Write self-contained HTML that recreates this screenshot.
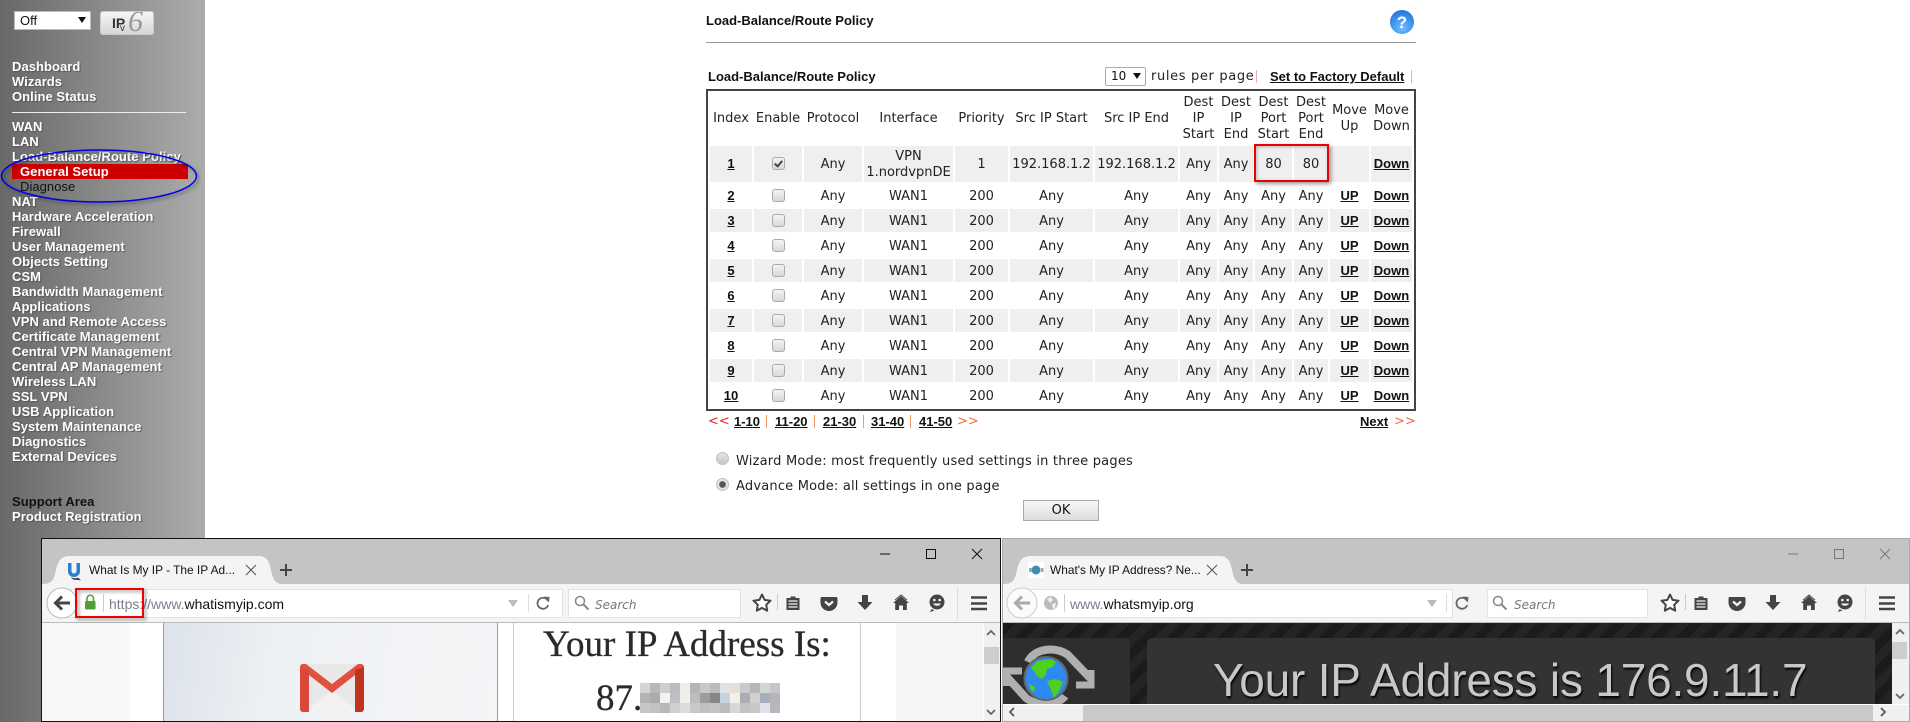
<!DOCTYPE html>
<html><head><meta charset="utf-8"><title>Load-Balance/Route Policy</title>
<style>
html,body{margin:0;padding:0;background:#fff;}
body{width:1910px;height:722px;position:relative;overflow:hidden;font-family:"DejaVu Sans",sans-serif;font-size:13px;color:#222;}
.a{position:absolute;white-space:nowrap;}
#side{position:absolute;left:0;top:0;width:205px;height:722px;background:linear-gradient(90deg,#686868,#acacac);}
#menu{position:absolute;left:12px;top:59px;font:bold 13px/15px "Liberation Sans",sans-serif;color:#fff;text-shadow:1px 1px 1px #555;letter-spacing:.05px;}
#menu div{height:15px;white-space:nowrap;}
.b{font:bold 13px/15px "Liberation Sans",sans-serif;color:#111;}
.bu{font:bold 13px/15px "Liberation Sans",sans-serif;color:#111;text-decoration:underline;}
#t{position:absolute;left:706px;top:89px;width:706px;border:2px solid #444;border-spacing:2px;border-collapse:separate;table-layout:fixed;background:#fff;}
#t td{padding:2px 0 0;box-sizing:border-box;text-align:center;vertical-align:middle;font:13px/16px "DejaVu Sans",sans-serif;color:#222;height:23px;overflow:hidden;white-space:nowrap;}
#t tr.g td{background:#efefef;}
#t tr.h td{height:51px;padding:0;}
#t tr.r1 td{height:36px;}
#t tr.r1 a{position:relative;top:-1px;}
#t a{font:bold 13px/15px "Liberation Sans",sans-serif;color:#111;text-decoration:underline;}
.cb{display:inline-block;width:11px;height:11px;border:1px solid #aaa;border-radius:3px;background:linear-gradient(#f4f4f4,#d8d8d8);vertical-align:middle;position:relative;top:-1px;}
.cb.on::after{content:"";position:absolute;left:3px;top:1px;width:3px;height:6px;border:solid #444;border-width:0 2px 2px 0;transform:rotate(40deg);}
.win{position:absolute;top:538px;height:184px;box-sizing:border-box;background:#c4c4c4;overflow:hidden;}
.tab{font:11.9px/16px "Liberation Sans",sans-serif;color:#111;z-index:6;}
.url{font:14px/20px "Liberation Sans",sans-serif;color:#111;}
.url span{color:#7d7d8f;}
.srch{font:italic 12px/18px "DejaVu Sans",sans-serif;color:#777;}
.box{position:absolute;background:#fff;border:1px solid #e3e3e3;box-sizing:border-box;}
</style></head>
<body>
<div id="side"></div>
<div class="a" style="left:12px;top:164px;width:176px;height:15px;background:#cc0000;"></div>
<div id="menu">
<div>Dashboard</div><div>Wizards</div><div>Online Status</div><div></div>
<div>WAN</div><div>LAN</div><div>Load-Balance/Route Policy</div>
<div style="position:relative;left:8px;text-shadow:none;">General Setup</div>
<div style="position:relative;left:8px;color:#111;font-weight:normal;text-shadow:none;">Diagnose</div>
<div>NAT</div><div>Hardware Acceleration</div><div>Firewall</div><div>User Management</div><div>Objects Setting</div><div>CSM</div><div>Bandwidth Management</div><div>Applications</div><div>VPN and Remote Access</div><div>Certificate Management</div><div>Central VPN Management</div><div>Central AP Management</div><div>Wireless LAN</div><div>SSL VPN</div><div>USB Application</div><div>System Maintenance</div><div>Diagnostics</div><div>External Devices</div><div></div><div></div>
<div style="color:#111;text-shadow:none;">Support Area</div><div>Product Registration</div>
</div>
<div class="a" style="left:12px;top:112px;width:174px;height:1px;background:#eee;"></div>
<div class="a" style="left:14px;top:11px;width:77px;height:19px;box-sizing:border-box;background:#fff;border:1px solid #bbb;font:13px/17px 'Liberation Sans',sans-serif;color:#111;padding-left:5px;">Off<span style="position:absolute;left:63px;top:5px;width:0;height:0;border:4px solid transparent;border-top:6px solid #111;border-bottom:0;"></span></div>
<div class="a" style="left:100px;top:11px;width:54px;height:24px;box-sizing:border-box;background:linear-gradient(#f7f7f7,#d6d6d6);border:1px solid #ccc;border-radius:3px;overflow:hidden;"><span class="a" style="left:11px;top:4px;font:bold 14px/15px 'Liberation Sans',sans-serif;color:#333;">IP</span><span class="a" style="left:19px;top:12px;font:10px/10px 'Liberation Sans',sans-serif;color:#333;">v</span><span class="a" style="left:27px;top:-5px;font:italic 30px/30px 'Liberation Serif',serif;color:#999;">6</span></div>

<!-- main header -->
<div class="a b" style="left:706px;top:13px;">Load-Balance/Route Policy</div>
<div class="a" style="left:706px;top:42px;width:710px;height:1px;background:#999;"></div>
<svg class="a" style="left:1390px;top:10px;" width="24" height="24"><defs><radialGradient id="hb" cx=".5" cy=".75" r=".8"><stop offset="0" stop-color="#6cc0ff"/><stop offset="1" stop-color="#1c6fd8"/></radialGradient></defs><circle cx="12" cy="12" r="12" fill="url(#hb)"/><text x="12" y="18" text-anchor="middle" font-family="Liberation Sans" font-weight="bold" font-size="17" fill="#fff">?</text></svg>
<div class="a b" style="left:708px;top:69px;">Load-Balance/Route Policy</div>
<div class="a" style="left:1105px;top:67px;width:41px;height:19px;box-sizing:border-box;border:1px solid #aaa;border-radius:2px;font:12px/17px 'DejaVu Sans',sans-serif;padding-left:5px;color:#111;background:#fff;">10<span style="position:absolute;left:27px;top:5px;width:0;height:0;border:4px solid transparent;border-top:6px solid #111;border-bottom:0;"></span></div>
<div class="a" style="left:1151px;top:69px;line-height:16px;letter-spacing:.65px;">rules per page</div>
<div class="a" style="left:1256px;top:70px;width:1px;height:13px;background:#f3a6c6;"></div>
<div class="a bu" style="left:1270px;top:69px;">Set to Factory Default</div>
<div class="a" style="left:1411px;top:70px;width:1px;height:13px;background:#f4b27a;"></div>

<table id="t"><colgroup><col style="width:42px"><col style="width:48px"><col style="width:58px"><col style="width:89px"><col style="width:53px"><col style="width:83px"><col style="width:83px"><col style="width:37px"><col style="width:34px"><col style="width:37px"><col style="width:34px"><col style="width:39px"><col style="width:41px"></colgroup>
<tr class="h"><td>Index</td><td>Enable</td><td>Protocol</td><td>Interface</td><td>Priority</td><td>Src IP Start</td><td>Src IP End</td><td>Dest<br>IP<br>Start</td><td>Dest<br>IP<br>End</td><td>Dest<br>Port<br>Start</td><td>Dest<br>Port<br>End</td><td>Move<br>Up</td><td>Move<br>Down</td></tr>
<tr class="g r1"><td><a>1</a></td><td><span class="cb on"></span></td><td>Any</td><td>VPN<br>1.nordvpnDE</td><td>1</td><td>192.168.1.2</td><td>192.168.1.2</td><td>Any</td><td>Any</td><td>80</td><td>80</td><td></td><td><a>Down</a></td></tr>
<tr><td><a>2</a></td><td><span class="cb"></span></td><td>Any</td><td>WAN1</td><td>200</td><td>Any</td><td>Any</td><td>Any</td><td>Any</td><td>Any</td><td>Any</td><td><a>UP</a></td><td><a>Down</a></td></tr>
<tr class="g"><td><a>3</a></td><td><span class="cb"></span></td><td>Any</td><td>WAN1</td><td>200</td><td>Any</td><td>Any</td><td>Any</td><td>Any</td><td>Any</td><td>Any</td><td><a>UP</a></td><td><a>Down</a></td></tr>
<tr><td><a>4</a></td><td><span class="cb"></span></td><td>Any</td><td>WAN1</td><td>200</td><td>Any</td><td>Any</td><td>Any</td><td>Any</td><td>Any</td><td>Any</td><td><a>UP</a></td><td><a>Down</a></td></tr>
<tr class="g"><td><a>5</a></td><td><span class="cb"></span></td><td>Any</td><td>WAN1</td><td>200</td><td>Any</td><td>Any</td><td>Any</td><td>Any</td><td>Any</td><td>Any</td><td><a>UP</a></td><td><a>Down</a></td></tr>
<tr><td><a>6</a></td><td><span class="cb"></span></td><td>Any</td><td>WAN1</td><td>200</td><td>Any</td><td>Any</td><td>Any</td><td>Any</td><td>Any</td><td>Any</td><td><a>UP</a></td><td><a>Down</a></td></tr>
<tr class="g"><td><a>7</a></td><td><span class="cb"></span></td><td>Any</td><td>WAN1</td><td>200</td><td>Any</td><td>Any</td><td>Any</td><td>Any</td><td>Any</td><td>Any</td><td><a>UP</a></td><td><a>Down</a></td></tr>
<tr><td><a>8</a></td><td><span class="cb"></span></td><td>Any</td><td>WAN1</td><td>200</td><td>Any</td><td>Any</td><td>Any</td><td>Any</td><td>Any</td><td>Any</td><td><a>UP</a></td><td><a>Down</a></td></tr>
<tr class="g"><td><a>9</a></td><td><span class="cb"></span></td><td>Any</td><td>WAN1</td><td>200</td><td>Any</td><td>Any</td><td>Any</td><td>Any</td><td>Any</td><td>Any</td><td><a>UP</a></td><td><a>Down</a></td></tr>
<tr><td><a>10</a></td><td><span class="cb"></span></td><td>Any</td><td>WAN1</td><td>200</td><td>Any</td><td>Any</td><td>Any</td><td>Any</td><td>Any</td><td>Any</td><td><a>UP</a></td><td><a>Down</a></td></tr>
</table>
<div class="a" style="left:1254px;top:144px;width:75px;height:38px;box-sizing:border-box;border:2px solid #e00;box-shadow:2px 2px 4px rgba(0,0,0,.4),inset 1px 1px 3px rgba(0,0,0,.25);"></div>

<!-- pagination -->
<div class="a" style="left:708px;top:414px;font:13px/16px 'DejaVu Sans',sans-serif;color:#e22;">&lt;&lt;</div>
<div class="a bu" style="left:734px;top:414px;">1-10</div>
<div class="a" style="left:766px;top:415px;width:1px;height:13px;background:#f09a68;"></div>
<div class="a bu" style="left:775px;top:414px;">11-20</div>
<div class="a" style="left:814px;top:415px;width:1px;height:13px;background:#f09a68;"></div>
<div class="a bu" style="left:823px;top:414px;">21-30</div>
<div class="a" style="left:863px;top:415px;width:1px;height:13px;background:#f09a68;"></div>
<div class="a bu" style="left:871px;top:414px;">31-40</div>
<div class="a" style="left:910px;top:415px;width:1px;height:13px;background:#f09a68;"></div>
<div class="a bu" style="left:919px;top:414px;">41-50</div>
<div class="a" style="left:957px;top:414px;font:13px/16px 'DejaVu Sans',sans-serif;color:#f06a3a;">&gt;&gt;</div>
<div class="a bu" style="left:1360px;top:414px;">Next</div>
<div class="a" style="left:1394px;top:414px;font:13px/16px 'DejaVu Sans',sans-serif;color:#f06a3a;">&gt;&gt;</div>

<span class="a" style="left:716px;top:452px;width:11px;height:11px;border-radius:50%;background:linear-gradient(#e4e4e4,#c8c8c8);border:1px solid #c0c0c0;"></span>
<span class="a" style="left:716px;top:478px;width:11px;height:11px;border-radius:50%;background:radial-gradient(circle,#555 0 3px,#e2e2e2 3.6px);border:1px solid #c0c0c0;"></span>
<div class="a" style="left:736px;top:454px;line-height:16px;letter-spacing:.21px;">Wizard Mode: most frequently used settings in three pages</div>
<div class="a" style="left:736px;top:479px;line-height:16px;letter-spacing:.2px;">Advance Mode: all settings in one page</div>
<div class="a" style="left:1023px;top:500px;width:76px;height:21px;box-sizing:border-box;border:1px solid #aaa;background:linear-gradient(#f8f8f8,#dcdcdc);text-align:center;font:13px/19px 'DejaVu Sans',sans-serif;color:#111;">OK</div>

<!-- window 1 -->
<div class="win" style="left:41px;width:960px;border:1px solid #111;"></div>
<!-- window 2 -->
<div class="win" style="left:1002px;width:908px;border:1px solid #aaa;"></div>

<!-- toolbars & content backgrounds -->
<div class="a" style="left:42px;top:584px;width:958px;height:38px;background:#f4f4f4;border-bottom:1px solid #bbb;"></div>
<div class="a" style="left:1003px;top:584px;width:906px;height:38px;background:#f4f4f4;border-bottom:1px solid #bbb;"></div>

<!-- content 1 -->
<div class="a" style="left:42px;top:623px;width:958px;height:98px;background:#fff;overflow:hidden;">
  <div class="a" style="left:0;top:0;width:88px;height:98px;background:#f7f7f7;"></div>
  <div class="a" style="left:121px;top:0;width:335px;height:98px;box-sizing:border-box;border-left:1px solid #999;border-right:1px solid #999;background:linear-gradient(100deg,#dde3eb,#eef1f4 35%,#f4f5f7);"></div>
  <div class="a" style="left:471px;top:0;width:1px;height:98px;background:#ccc;"></div>
  <div class="a" style="left:818px;top:0;width:1px;height:98px;background:#ccc;"></div>
  <div class="a" style="left:854px;top:0;width:87px;height:98px;background:#f5f5f5;"></div>
  <div class="a" style="left:941px;top:0;width:17px;height:98px;background:#f0f0f0;border-left:1px solid #fff;box-sizing:border-box;"></div>
  <div class="a" style="left:942px;top:24px;width:15px;height:17px;background:#cdcdcd;"></div>
  <div class="a" style="left:501px;top:0;font:37px/44px 'Liberation Serif',serif;color:#2a2a2a;-webkit-text-stroke:.3px #2a2a2a;">Your IP Address Is:</div>
  <div class="a" style="left:554px;top:54px;font:37px/44px 'Liberation Serif',serif;color:#2a2a2a;-webkit-text-stroke:.3px #2a2a2a;">87.</div>
</div>

<!-- content 2 -->
<div class="a" style="left:1003px;top:623px;width:906px;height:98px;background:#f0f0f0;overflow:hidden;">
  <div class="a" style="left:0;top:0;width:889px;height:81px;background:repeating-linear-gradient(135deg,#1b1b1b 0 9px,#242424 9px 18px);overflow:hidden;">
    <div class="a" style="left:0;top:15px;width:127px;height:70px;background:#2e2e2e;border-radius:0 5px 0 0;"></div>
    <div class="a" style="left:144px;top:15px;width:728px;height:70px;background:#333;border-radius:5px 5px 0 0;"></div>
    <div class="a" style="left:210px;top:30px;font:46px/54px 'Liberation Sans',sans-serif;color:#c8c8c8;text-shadow:1px 2px 2px #000;letter-spacing:-.2px;">Your IP Address is 176.9.11.7</div>
  </div>
  <div class="a" style="left:0;top:81px;width:906px;height:1px;background:#fff;"></div>
  <div class="a" style="left:80px;top:82px;width:790px;height:16px;background:#c9c9c9;"></div>
  <div class="a" style="left:889px;top:0;width:16px;height:81px;background:#f0f0f0;"></div>
  <div class="a" style="left:889px;top:19px;width:15px;height:17px;background:#cdcdcd;"></div>
</div>

<!-- URL bars -->
<div class="box" style="left:60px;top:589px;width:503px;height:29px;"></div>
<div class="box" style="left:1021px;top:589px;width:432px;height:29px;"></div>
<div class="box" style="left:568px;top:589px;width:173px;height:29px;"></div>
<div class="box" style="left:1487px;top:589px;width:161px;height:29px;"></div>

<!-- chrome text -->
<div class="a tab" style="left:89px;top:562px;">What Is My IP - The IP Ad...</div>
<div class="a tab" style="left:1050px;top:562px;">What's My IP Address? Ne...</div>
<div class="a url" style="left:109px;top:594px;"><span>https://www.</span>whatismyip.com</div>
<div class="a url" style="left:1070px;top:594px;"><span>www.</span>whatsmyip.org</div>
<div class="a srch" style="left:595px;top:596px;">Search</div>
<div class="a srch" style="left:1514px;top:596px;">Search</div>

<!-- overlay icons -->
<svg class="a" style="left:0;top:0;z-index:5;" width="1910" height="722" viewBox="0 0 1910 722">
<defs>
<filter id="ds" x="-10%" y="-20%" width="120%" height="150%"><feDropShadow dx="2" dy="2" stdDeviation="1.5" flood-color="#000" flood-opacity=".4"/></filter>
<g id="tb">
  <path d="M762 594.500l2.600 5.400 5.900.8-4.300 4.100 1 5.900-5.200-2.800-5.200 2.800 1-5.900-4.300-4.100 5.900-.8z" fill="#fff" stroke="#444" stroke-width="2" stroke-linejoin="round"/>
  <rect x="777" y="594" width="1" height="16" fill="#ccc"/>
  <path d="M786.500 598h4v-1.500h5v1.500h4v12h-13z" fill="#444"/><path d="M788.500 601h9M788.500 604h9M788.500 607h9" stroke="#f4f4f4" stroke-width="1.200"/>
  <path d="M822 597h14a1.500 1.500 0 0 1 1.500 1.500v4c0 5-4 8.500-8.500 8.500s-8.500-3.500-8.500-8.500v-4a1.500 1.500 0 0 1 1.500-1.500z" fill="#444"/><path d="M825 601.500l4 3.500 4-3.500" stroke="#f4f4f4" stroke-width="2.200" fill="none"/>
  <path d="M862 595h6v7h4.500l-7.500 8-7.500-8h4.500z" fill="#444"/>
  <path d="M901 596l8 7h-2.200v7h-3.800v-4.500h-4v4.500h-3.800v-7h-2.200z" fill="#444"/><path d="M895 600l6-5 6 5" stroke="#444" stroke-width="1" fill="none"/>
  <circle cx="937" cy="602" r="7.500" fill="#444"/><path d="M931.500 609l-1.500 3 4.500-1.500z" fill="#444"/><circle cx="934.300" cy="600" r="1.300" fill="#f4f4f4"/><circle cx="939.700" cy="600" r="1.300" fill="#f4f4f4"/><path d="M933 603.500c1.500 3 6.500 3 8 0z" fill="#f4f4f4"/>
  <rect x="957" y="587" width="1" height="33" fill="#ddd"/>
  <path d="M971 597.500h16M971 603.500h16M971 609h16" stroke="#444" stroke-width="2.600"/>
</g>
</defs>

<!-- sidebar ellipse -->
<ellipse cx="99" cy="176" rx="97.500" ry="26" fill="none" stroke="#0000e6" stroke-width="1.500" filter="url(#ds)"/>

<!-- tabs -->
<path d="M42 584C52 584 54 580 56 570C58 560 62 556 70 556L258 556C266 556 269 560 271 570C273 580 276 584 282 584Z" fill="#f4f4f4"/>
<path d="M1003 584C1013 584 1015 580 1017 570C1019 560 1023 556 1031 556L1219 556C1227 556 1230 560 1232 570C1234 580 1237 584 1243 584Z" fill="#f4f4f4"/>

<!-- favicon 1 -->
<path d="M68 563h3.500v8a2.500 2.500 0 0 0 5 0v-8h3.500v8.500c0 3-2.500 5.500-6 5.500s-6-2.500-6-5.500z" fill="#2a7fd0"/><path d="M71 577c3 2 6 1.500 7 .5l3 3-4-.8c-2 .5-4.500 .3-6-2.700z" fill="#333"/>
<!-- favicon 2 -->
<rect x="1028" y="562" width="16" height="16" fill="#fff"/><circle cx="1036" cy="570" r="4.500" fill="#3a8ad0"/><path d="M1034 568l3-1 1 3-2 2z" fill="#4a9a4a"/><path d="M1029 568h2.500v4h-2.500zM1041 568h2.500v4h-2.500z" fill="#9aa"/>

<!-- close + plus -->
<path d="M246 565l10 10M256 565l-10 10" stroke="#555" stroke-width="1"/>
<path d="M1207 565l10 10M1217 565l-10 10" stroke="#555" stroke-width="1"/>
<path d="M280 570h12M286 564v12" stroke="#444" stroke-width="2"/>
<path d="M1241 570h12M1247 564v12" stroke="#444" stroke-width="2"/>

<!-- window controls -->
<path d="M880 554h10" stroke="#111" stroke-width="1"/><rect x="926.500" y="549.500" width="9" height="9" fill="none" stroke="#111"/><path d="M972 549l10 10M982 549l-10 10" stroke="#111"/>
<path d="M1788 554h10" stroke="#777"/><rect x="1834.500" y="549.500" width="9" height="9" fill="none" stroke="#777"/><path d="M1880 549l10 10M1890 549l-10 10" stroke="#777"/>

<!-- back 1 -->
<circle cx="62" cy="603" r="15" fill="#fff" stroke="#bbb"/>
<path d="M70 603h-13M62 596.500l-6.500 6.500 6.500 6.500" stroke="#444" stroke-width="3" fill="none"/>
<!-- back 2 -->
<circle cx="1022" cy="603" r="15" fill="#fbfbfb" stroke="#ccc"/>
<path d="M1030 603h-13M1022 596.500l-6.500 6.500 6.500 6.500" stroke="#aaa" stroke-width="3" fill="none"/>
<!-- lock -->
<rect x="85" y="601" width="10.500" height="8.500" rx="1" fill="#52a02f"/><path d="M87 601v-2.500a3.200 3.200 0 0 1 6.500 0v2.500" stroke="#52a02f" stroke-width="1.600" fill="none"/>
<rect x="103" y="594" width="1" height="18" fill="#ccc"/>
<!-- globe -->
<circle cx="1051" cy="603" r="7" fill="#bbb"/><path d="M1047 599l4-2 2 3-3 3zM1052 604l4-1-1 5-2 1z" fill="#eee"/>
<rect x="1064" y="594" width="1" height="18" fill="#ccc"/>
<!-- drop arrows + seps + reload -->
<path d="M508 600h10l-5 7z" fill="#bbb"/><path d="M1427 600h10l-5 7z" fill="#bbb"/>
<rect x="528" y="594" width="1" height="18" fill="#ddd"/><rect x="1446" y="594" width="1" height="18" fill="#ddd"/>
<path d="M548 601a5.500 5.500 0 1 0 .2 4" stroke="#666" stroke-width="1.800" fill="none"/><path d="M544 596.500l5.500.5-.5 5.500z" fill="#666"/>
<path d="M1467 601a5.500 5.500 0 1 0 .2 4" stroke="#666" stroke-width="1.800" fill="none"/><path d="M1463 596.500l5.500.5-.5 5.500z" fill="#666"/>
<!-- magnifier -->
<circle cx="580" cy="601" r="4.500" fill="none" stroke="#888" stroke-width="1.500"/><path d="M583.500 604.500l5 5" stroke="#888" stroke-width="2"/>
<circle cx="1498" cy="601" r="4.500" fill="none" stroke="#888" stroke-width="1.500"/><path d="M1501.500 604.500l5 5" stroke="#888" stroke-width="2"/>

<use href="#tb"/><use href="#tb" x="908"/>

<!-- red box -->
<rect x="76" y="589" width="67" height="28" fill="none" stroke="#e00" stroke-width="2" filter="url(#ds)"/>

<!-- gmail -->
<rect x="300" y="664" width="64" height="48" rx="3" fill="#e8e8e8"/>
<path d="M305 712l27-22 27 22z" fill="#f2f2f2"/>
<path d="M300 668l32 25 32-25v-1a3 3 0 0 0-3-3h-3l-26 20-26-20h-3a3 3 0 0 0-3 3z" fill="#e0503f"/>
<path d="M300 667v42a3 3 0 0 0 3 3h6v-42z" fill="#d9483b"/><path d="M364 667v42a3 3 0 0 1-3 3h-6v-42z" fill="#c0331f"/>

<!-- pixel blur -->
<g>
<rect x="640" y="683" width="140" height="30" fill="#c4c4c6"/>
<rect x="640" y="683" width="10" height="10" fill="#d4d4d4"/><rect x="650" y="683" width="10" height="10" fill="#b8b8ba"/><rect x="660" y="683" width="10" height="10" fill="#cfcfcf"/><rect x="670" y="683" width="10" height="10" fill="#bcbcbe"/><rect x="680" y="683" width="10" height="10" fill="#eee"/><rect x="690" y="683" width="10" height="10" fill="#b5b5b5"/><rect x="700" y="683" width="10" height="10" fill="#c8c8c8"/><rect x="710" y="683" width="10" height="10" fill="#bbb"/><rect x="720" y="683" width="10" height="10" fill="#dfe3e6"/><rect x="730" y="683" width="10" height="10" fill="#e4e0d8"/><rect x="740" y="683" width="10" height="10" fill="#cacaca"/><rect x="750" y="683" width="10" height="10" fill="#b6b6b8"/><rect x="760" y="683" width="10" height="10" fill="#d4d4d6"/><rect x="770" y="683" width="10" height="10" fill="#c6c6c8"/>
<rect x="640" y="693" width="10" height="10" fill="#b4b4b6"/><rect x="650" y="693" width="10" height="10" fill="#acacae"/><rect x="660" y="693" width="10" height="10" fill="#f2f2f2"/><rect x="670" y="693" width="10" height="10" fill="#c0c0c2"/><rect x="680" y="693" width="10" height="10" fill="#f0f0ea"/><rect x="690" y="693" width="10" height="10" fill="#bcbcbc"/><rect x="700" y="693" width="10" height="10" fill="#9c9c9c"/><rect x="710" y="693" width="10" height="10" fill="#868686"/><rect x="720" y="693" width="10" height="10" fill="#c6d4dc"/><rect x="730" y="693" width="10" height="10" fill="#f4efe8"/><rect x="740" y="693" width="10" height="10" fill="#acacb2"/><rect x="750" y="693" width="10" height="10" fill="#d0d0d0"/><rect x="760" y="693" width="10" height="10" fill="#a8aebb"/><rect x="770" y="693" width="10" height="10" fill="#b6b6b8"/>
<rect x="640" y="703" width="10" height="10" fill="#c6c6c8"/><rect x="650" y="703" width="10" height="10" fill="#c2c2c4"/><rect x="660" y="703" width="10" height="10" fill="#b8b8ba"/><rect x="670" y="703" width="10" height="10" fill="#d0d0d0"/><rect x="680" y="703" width="10" height="10" fill="#dcdcdc"/><rect x="690" y="703" width="10" height="10" fill="#c8c8c8"/><rect x="700" y="703" width="10" height="10" fill="#c0c0c0"/><rect x="710" y="703" width="10" height="10" fill="#c4c4c4"/><rect x="720" y="703" width="10" height="10" fill="#bcbcbc"/><rect x="730" y="703" width="10" height="10" fill="#d8d8d0"/><rect x="740" y="703" width="10" height="10" fill="#c0c4c8"/><rect x="750" y="703" width="10" height="10" fill="#c8c8c8"/><rect x="760" y="703" width="10" height="10" fill="#dde3e8"/><rect x="770" y="703" width="10" height="10" fill="#b8b8bc"/>
</g>

<!-- scrollbar arrows -->
<path d="M987 635l4-4 4 4" stroke="#666" stroke-width="1.800" fill="none"/><path d="M987 710l4 4 4-4" stroke="#666" stroke-width="1.800" fill="none"/>
<path d="M1896 634l4-4 4 4" stroke="#666" stroke-width="1.800" fill="none"/><path d="M1896 694l4 4 4-4" stroke="#666" stroke-width="1.800" fill="none"/>
<path d="M1014 708l-4 4 4 4" stroke="#555" stroke-width="1.800" fill="none"/><path d="M1881 708l4 4-4 4" stroke="#555" stroke-width="1.800" fill="none"/>

<!-- site 2 logo, clipped to content -->
<clipPath id="c2"><rect x="1003" y="623" width="886" height="81"/></clipPath>
<g clip-path="url(#c2)">
  <path d="M1028 662C1034 648 1056 646 1068 655L1090 678" stroke="#b0b0b0" stroke-width="8" fill="none"/>
  <path d="M1076 685H1091V670" stroke="#b0b0b0" stroke-width="7" fill="none"/>
  <path d="M1065 696C1058 706 1036 706 1026 698L1006 676" stroke="#b0b0b0" stroke-width="8" fill="none"/>
  <path d="M1022 671H1006V686" stroke="#b0b0b0" stroke-width="7" fill="none"/>
  <circle cx="1046" cy="678.500" r="21.500" fill="#2e8af0" stroke="#666" stroke-width="2"/>
  <path d="M1031 668l6-7 14-2 5 3-3 5-6 2-1 6-4 4-5-3-3-5zM1047 681l9-2 7 3-4 9-5 7-3-8zM1029 684l6 3-1 5-3-2z" fill="#4fd01f"/>
</g>
</svg>
</body></html>
